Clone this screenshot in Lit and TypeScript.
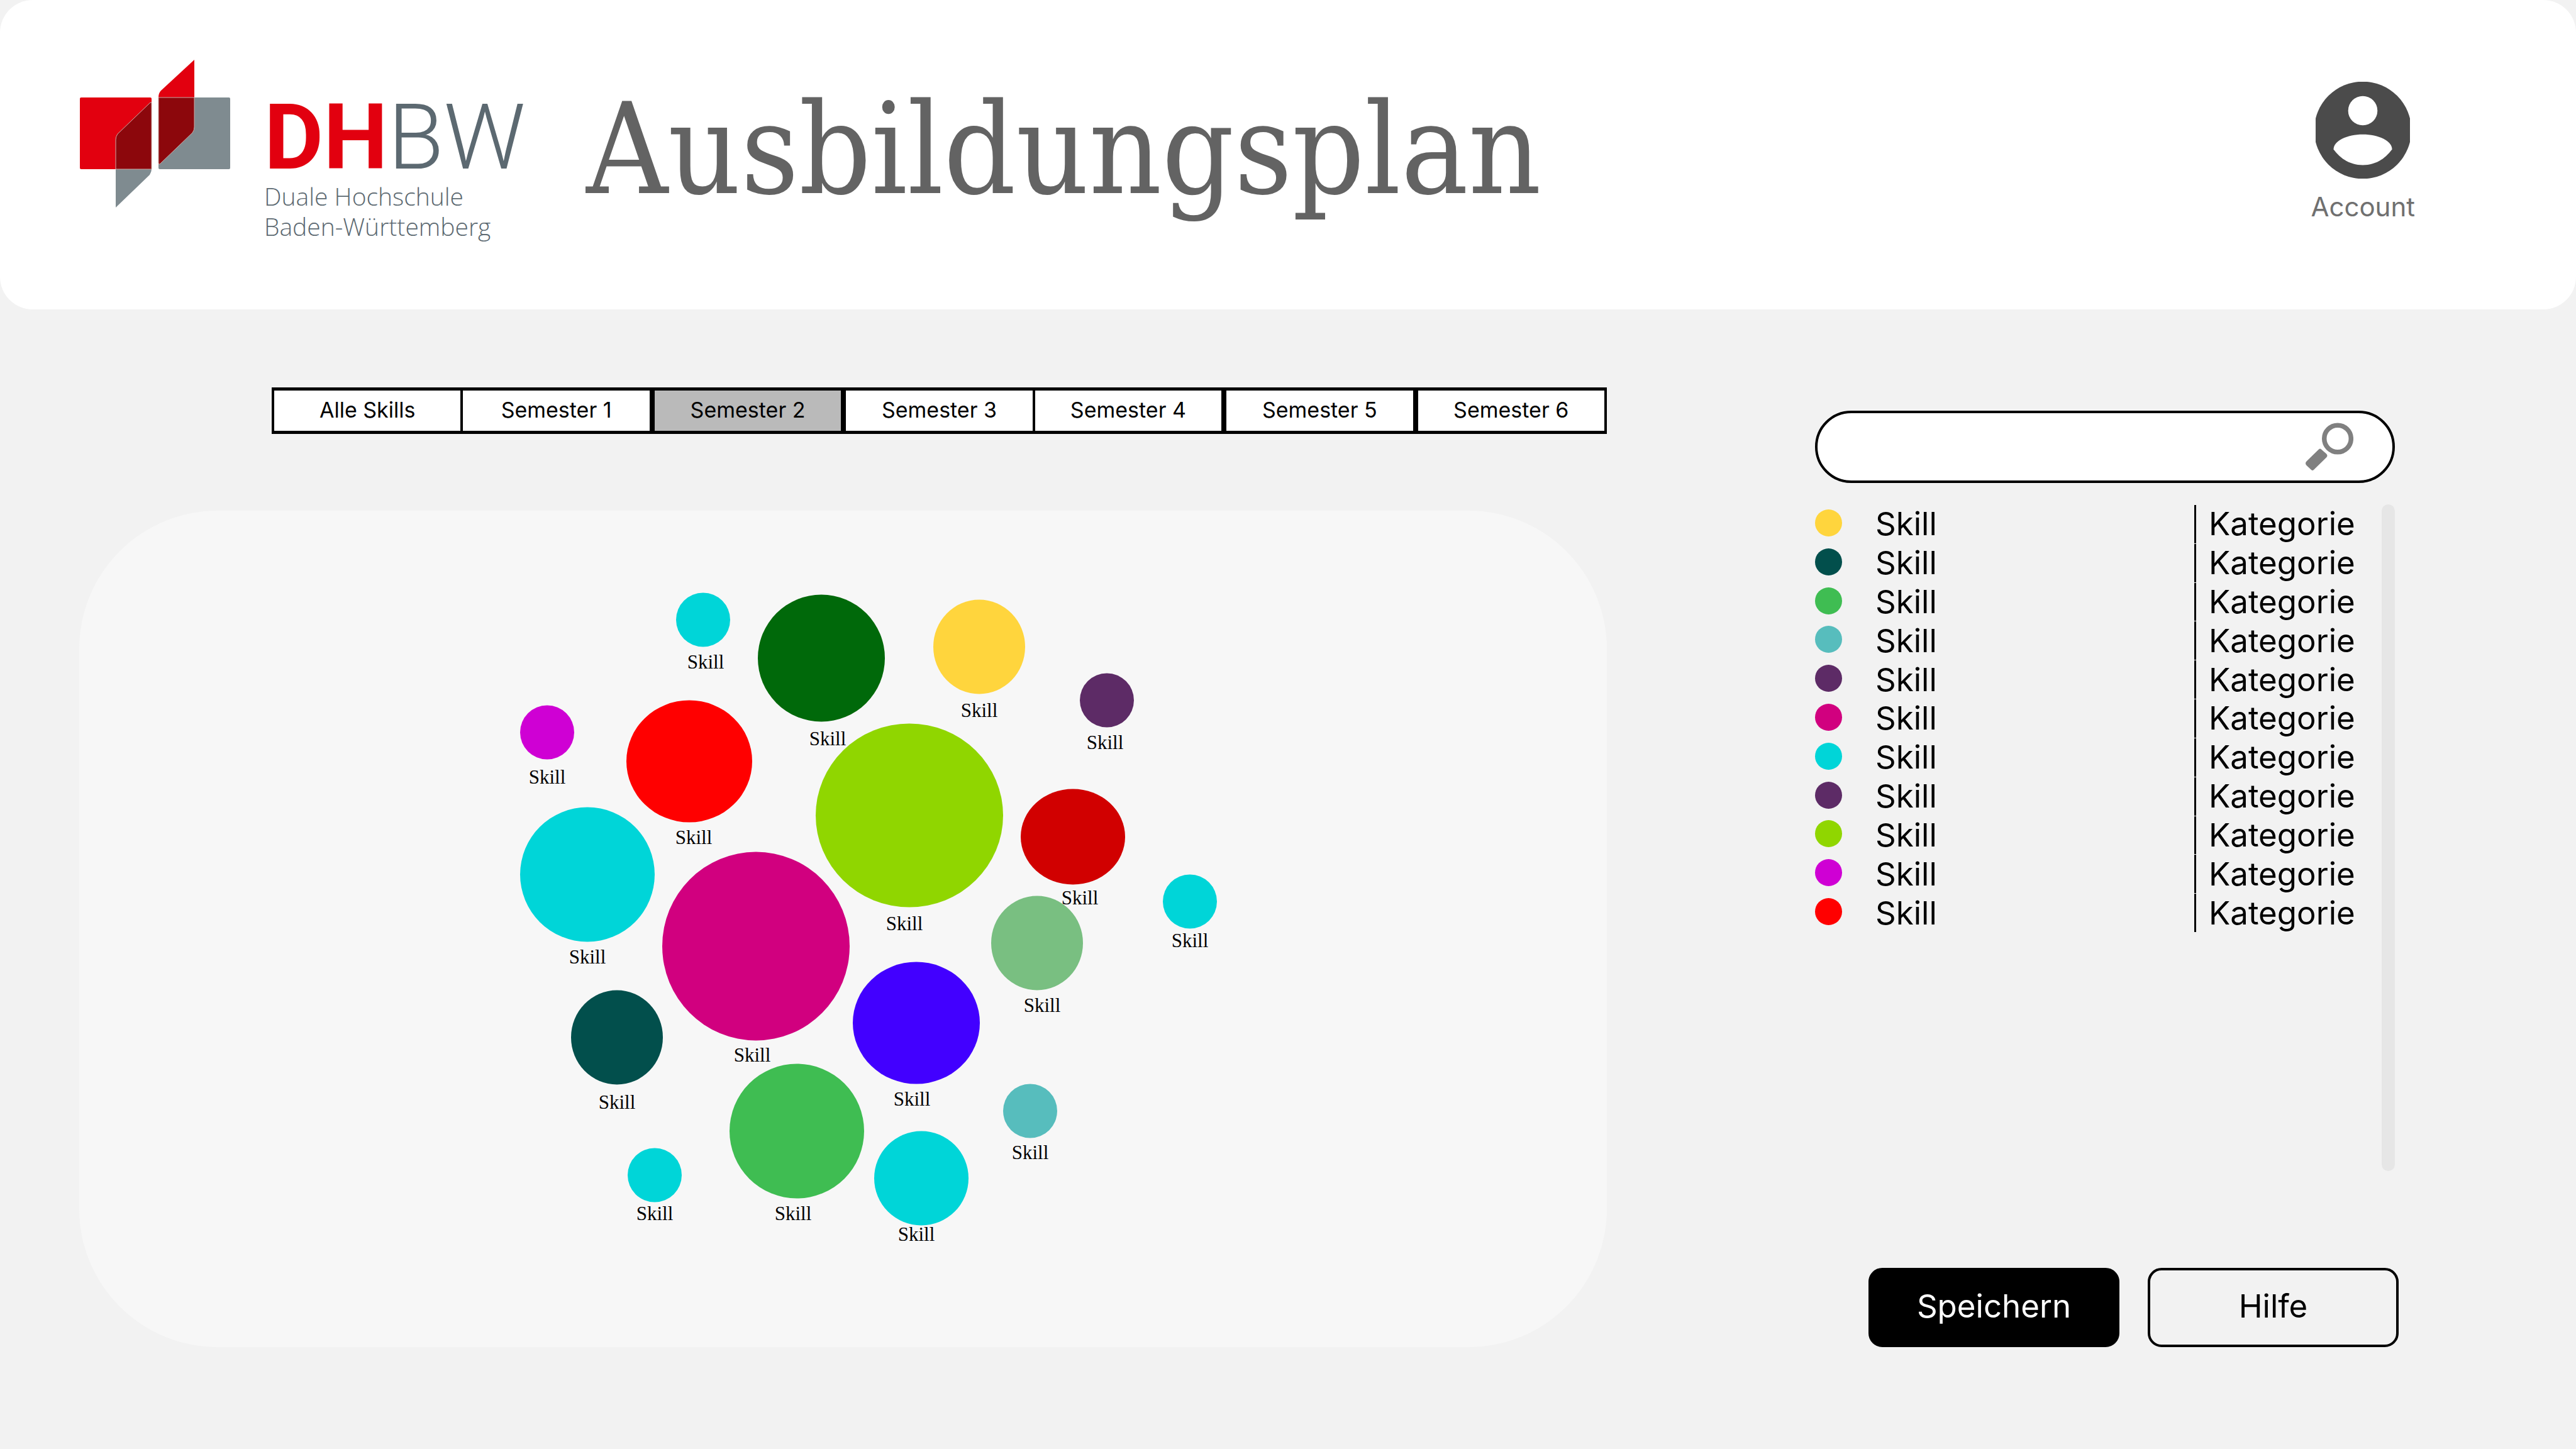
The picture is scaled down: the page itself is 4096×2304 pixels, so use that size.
import { LitElement, html, svg, css } from "lit";
import { customElement, state } from "lit/decorators.js";
import { classMap } from "lit/directives/class-map.js";
import { styleMap } from "lit/directives/style-map.js";

interface Bubble {
  cx: number;
  cy: number;
  rx: number;
  ry: number;
  color: string;
  labelX: number;
  labelY: number;
}

const SEMESTERS = [
  "Alle Skills",
  "Semester 1",
  "Semester 2",
  "Semester 3",
  "Semester 4",
  "Semester 5",
  "Semester 6",
];

const SKILL_COLORS = [
  "#ffd53d",
  "#024f4c",
  "#3fbd52",
  "#57bdbd",
  "#5d2b66",
  "#d1007f",
  "#00d5d8",
  "#5d2b66",
  "#90d600",
  "#cf00d4",
  "#ff0000",
];

const BUBBLES: Bubble[] = [
  { cx: 992, cy: 174, rx: 43, ry: 43, color: "#00d5d8", labelX: 996, labelY: 251 },
  { cx: 1180, cy: 235, rx: 101, ry: 101, color: "#00690a", labelX: 1190, labelY: 373 },
  { cx: 1431, cy: 217, rx: 73, ry: 75, color: "#ffd53d", labelX: 1431, labelY: 328 },
  { cx: 1634, cy: 302, rx: 43, ry: 43, color: "#5d2b66", labelX: 1631, labelY: 379 },
  { cx: 744, cy: 353, rx: 43, ry: 43, color: "#cf00d4", labelX: 744, labelY: 434 },
  { cx: 970, cy: 399, rx: 100, ry: 97, color: "#ff0000", labelX: 977, labelY: 530 },
  { cx: 1320, cy: 485, rx: 149, ry: 146, color: "#90d600", labelX: 1312, labelY: 667 },
  { cx: 1580, cy: 519, rx: 83, ry: 76, color: "#d10000", labelX: 1591, labelY: 626 },
  { cx: 1766, cy: 622, rx: 43, ry: 43, color: "#00d5d8", labelX: 1766, labelY: 694 },
  { cx: 1523, cy: 688, rx: 73, ry: 75, color: "#79bf81", labelX: 1531, labelY: 797 },
  { cx: 808, cy: 579, rx: 107, ry: 107, color: "#00d5d8", labelX: 808, labelY: 720 },
  { cx: 1076, cy: 693, rx: 149, ry: 150, color: "#d1007f", labelX: 1070, labelY: 876 },
  { cx: 855, cy: 838, rx: 73, ry: 75, color: "#024f4c", labelX: 855, labelY: 951 },
  { cx: 1331, cy: 815, rx: 101, ry: 97, color: "#4200ff", labelX: 1324, labelY: 946 },
  { cx: 1141, cy: 987, rx: 107, ry: 107, color: "#3fbd52", labelX: 1135, labelY: 1128 },
  { cx: 1339, cy: 1062, rx: 75, ry: 75, color: "#00d5d8", labelX: 1331, labelY: 1161 },
  { cx: 1512, cy: 955, rx: 43, ry: 43, color: "#57bdbd", labelX: 1512, labelY: 1031 },
  { cx: 915, cy: 1057, rx: 43, ry: 43, color: "#00d5d8", labelX: 915, labelY: 1128 },
];

@customElement("dhbw-logo")
export class DhbwLogo extends LitElement {
  static styles = css`
    :host {
      display: flex;
      align-items: flex-start;
      gap: 54px;
    }
    .mark {
      display: block;
      flex: none;
      width: 240px;
      height: 236px;
    }
    .words {
      padding-top: 54px;
      white-space: nowrap;
      color: #5c6971;
    }
    .name {
      font: 300 145px/140px Roboto, sans-serif;
    }
    .strong {
      font-weight: 700;
      color: #e2000f;
    }
    .line {
      font: 300 39px/48px "Open Sans", "Noto Sans", sans-serif;
    }
  `;

  render() {
    return html`
      <svg class="mark" viewBox="0 0 240 236" aria-hidden="true">
        <rect x="1" y="61" width="114" height="114" rx="2" fill="#e2000f" />
        <rect x="126" y="61" width="114" height="114" rx="2" fill="#7f8b90" />
        <path d="M58 236V175H115Q115 179 112 184L59 235Z" fill="#7f8b90" />
        <path d="M183 1V61H126Q126 54 130 50Z" fill="#e2000f" />
        <path
          d="M58 175V128Q58 123 61 119L113 69Q115 68 115 70V175Z"
          fill="#8c070c"
          stroke="#c9a9a4"
          stroke-width="1"
        />
        <path
          d="M126 61H183V108Q183 113 180 117L128 167Q126 168 126 165Z"
          fill="#8c070c"
          stroke="#c9a9a4"
          stroke-width="1"
        />
      </svg>
      <div class="words">
        <div class="name"><span class="strong">DH</span>BW</div>
        <div class="line">Duale Hochschule</div>
        <div class="line">Baden-Württemberg</div>
      </div>
    `;
  }
}

@customElement("skill-map")
export class SkillMap extends LitElement {
  static styles = css`
    :host {
      display: flex;
      background: #f7f7f7;
      border-radius: 220px;
    }
    .plane {
      display: block;
      width: 100%;
    }
    .label {
      font: 400 31px "Liberation Serif", serif;
      fill: #000;
      text-anchor: middle;
    }
  `;

  render() {
    return html`
      <svg class="plane" viewBox="0 1 2429 1329" role="img" aria-label="Skills">
        ${BUBBLES.map(
          (b) => svg`<ellipse cx=${b.cx} cy=${b.cy} rx=${b.rx} ry=${b.ry} fill=${b.color}></ellipse>`
        )}
        ${BUBBLES.map(
          (b) => svg`<text class="label" x=${b.labelX} y=${b.labelY}>Skill</text>`
        )}
      </svg>
    `;
  }
}

@customElement("skill-list")
export class SkillList extends LitElement {
  static styles = css`
    :host {
      display: flex;
      justify-content: space-between;
      align-items: stretch;
      gap: 40px;
    }
    .table {
      flex: 1;
      align-self: flex-start;
      height: 681px;
      border-collapse: separate;
      border-spacing: 0 1px;
      font: 400 51px/60px Inter, sans-serif;
      color: #000;
    }
    .cell {
      padding: 0;
      text-align: left;
      vertical-align: middle;
      font-weight: 400;
    }
    .dot-cell {
      width: 96px;
    }
    .dot {
      display: block;
      width: 43px;
      height: 43px;
      margin-bottom: 4px;
      border-radius: 50%;
    }
    .category {
      width: 235px;
      padding-left: 20px;
      border-left: 3px solid #000;
    }
    .track {
      flex: none;
      width: 21px;
      border-radius: 12px;
      background: #e6e6e6;
    }
  `;

  render() {
    return html`
      <table class="table" aria-label="Skills">
        <tbody>
          ${SKILL_COLORS.map(
            (color) => html`
              <tr>
                <td class="cell dot-cell">
                  <span class="dot" style=${styleMap({ background: color })}></span>
                </td>
                <th class="cell" scope="row">Skill</th>
                <td class="cell category">Kategorie</td>
              </tr>
            `
          )}
        </tbody>
      </table>
      <div class="track"></div>
    `;
  }
}

@customElement("app-root")
export class AppRoot extends LitElement {
  @state() private selected = 2;

  static styles = css`
    :host {
      display: flex;
      flex-direction: column;
      min-height: 100vh;
      background: #f2f2f2;
      font-family: Inter, sans-serif;
    }
    .header {
      display: flex;
      align-items: flex-start;
      min-height: 398px;
      padding: 94px 256px 0 126px;
      border-radius: 52px;
      background: #fff;
    }
    .logo {
      flex: none;
      width: 760px;
    }
    .title {
      flex: 1;
      margin: 24px 0 0 46px;
      font: 400 200px/240px "DejaVu Serif Condensed", "DejaVu Serif", serif;
      color: #636363;
    }
    .account {
      display: flex;
      flex-direction: column;
      align-items: center;
      gap: 19px;
      margin-top: 36px;
      padding: 0;
      border: 0;
      background: none;
      font: 400 42px/52px Inter, sans-serif;
      color: #707070;
    }
    .account-icon {
      display: block;
      width: 150px;
      height: 154px;
    }
    .main {
      flex: 1;
      display: grid;
      grid-template-columns: 1fr 928px;
      gap: 331px;
      padding: 124px 282px 162px 126px;
    }
    .plan {
      display: flex;
      flex-direction: column;
      gap: 122px;
    }
    .tabs {
      display: flex;
      margin-left: 306px;
    }
    .tab {
      flex: 1;
      box-sizing: border-box;
      height: 74px;
      padding: 0 0 2px;
      border: solid #000;
      border-width: 5px 4px;
      border-radius: 0;
      background: #fff;
      font: 400 34px/40px Inter, sans-serif;
      color: #000;
    }
    .joined {
      margin-left: -4px;
    }
    .selected {
      background: #bababa;
    }
    .map {
      flex: 1;
    }
    .side {
      display: flex;
      flex-direction: column;
      padding-top: 37px;
    }
    .search {
      display: flex;
      align-items: center;
      box-sizing: border-box;
      height: 115px;
      margin-right: 6px;
      padding: 0 62px;
      border: 4px solid #000;
      border-radius: 58px;
      background: #fff;
    }
    .search-input {
      flex: 1;
      min-width: 0;
      padding: 0;
      border: 0;
      outline: 0;
      background: none;
      font: 400 51px/60px Inter, sans-serif;
    }
    .search-icon {
      display: block;
      flex: none;
      width: 77px;
      height: 77px;
    }
    .list {
      flex: 1;
      margin: 34px 6px 154px 0;
    }
    .actions {
      display: flex;
      justify-content: flex-end;
      gap: 45px;
    }
    .action {
      box-sizing: border-box;
      width: 399px;
      height: 126px;
      padding: 0 0 5px;
      border: 4px solid #000;
      border-radius: 22px;
      background: none;
      font: 400 51px/60px Inter, sans-serif;
      color: #000;
    }
    .primary {
      background: #000;
      color: #fff;
    }
  `;

  private renderTab(name: string, index: number) {
    const active = index === this.selected;
    return html`
      <button
        class=${classMap({
          tab: true,
          joined: index === 1 || index === 4,
          selected: active,
        })}
        role="tab"
        aria-selected=${active ? "true" : "false"}
        @click=${() => (this.selected = index)}
      >
        ${name}
      </button>
    `;
  }

  render() {
    return html`
      <header class="header">
        <dhbw-logo class="logo"></dhbw-logo>
        <h1 class="title">Ausbildungsplan</h1>
        <button class="account">
          <svg class="account-icon" viewBox="0 0 150 154" aria-hidden="true">
            <circle cx="75" cy="77" r="77.3" fill="#4b4b4b" />
            <circle cx="75" cy="46" r="23.3" fill="#fff" />
            <path
              d="M28.5 107.5C28.5 94 50 83.8 75 83.8S121.5 94 121.5 107.5C110.500 123 94 132.500 75 132.500S39.500 123 28.500 107.500Z"
              fill="#fff"
            />
          </svg>
          <span>Account</span>
        </button>
      </header>
      <main class="main">
        <section class="plan">
          <div class="tabs" role="tablist">
            ${SEMESTERS.map((name, index) => this.renderTab(name, index))}
          </div>
          <skill-map class="map"></skill-map>
        </section>
        <aside class="side">
          <label class="search">
            <input class="search-input" type="text" aria-label="Suche" />
            <svg class="search-icon" viewBox="0 0 77 77" aria-hidden="true">
              <circle cx="52" cy="25.500" r="21.300" fill="none" stroke="#808080" stroke-width="7.500" />
              <path
                d="M22 42.500Q24 40.500 26 42.500L34 49.500Q37 52.500 34 55.500L14 75Q12 77 10 75L3 68.500Q-1 64.500 3 61Z"
                fill="#808080"
              />
            </svg>
          </label>
          <skill-list class="list"></skill-list>
          <div class="actions">
            <button class="action primary">Speichern</button>
            <button class="action">Hilfe</button>
          </div>
        </aside>
      </main>
    `;
  }
}
